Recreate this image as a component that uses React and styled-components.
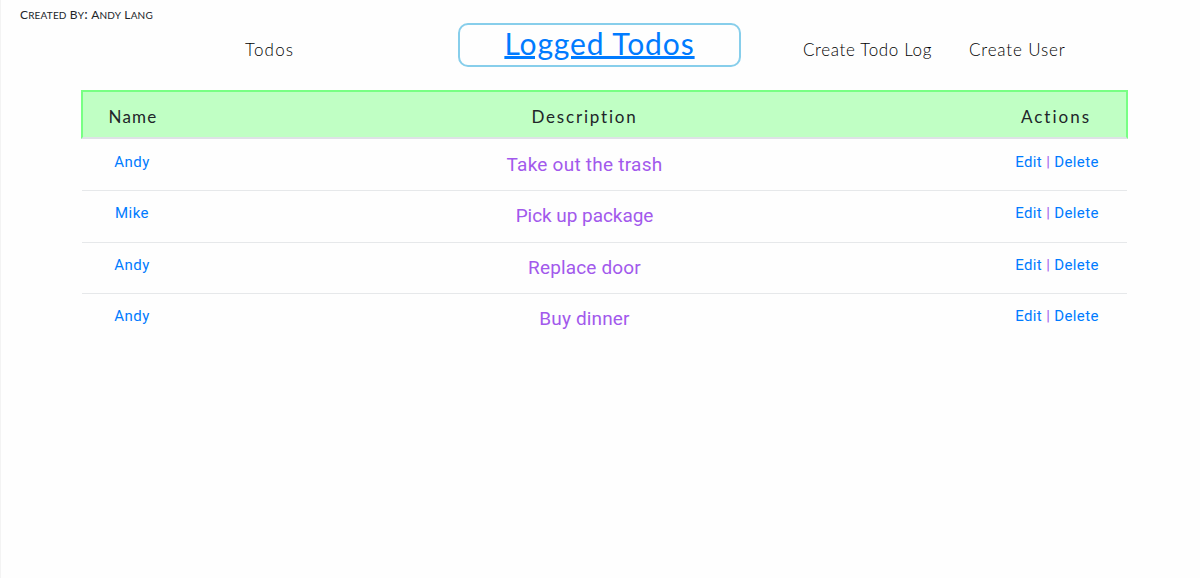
import React from "react";
import styled, { createGlobalStyle } from "styled-components";

const GlobalStyle = createGlobalStyle`
  * { box-sizing: border-box; }
  body { margin: 0; background: #fefefe; color: #212529; }
`;

const Page = styled.div`
  height: 578px;
  overflow: hidden;
  border-left: 1px solid #f3f3f3;
  font-family: Roboto, "Liberation Sans", sans-serif;
`;

const Credit = styled.div`
  height: 23px;
  padding: 6px 0 0 19px;
  font: 12px/16px Lato, sans-serif;
  letter-spacing: 0.17px;
  white-space: nowrap;
`;

const CreditWord = styled.span`
  display: inline-block;
  font-size: 14px;
  font-variant: small-caps;

  &::first-letter {
    font-size: 12px;
  }
`;

const Nav = styled.nav`
  display: grid;
  grid-template-columns: 457px 283px 1fr;
  height: 67px;
  align-items: start;
`;

const NavSide = styled.div`
  display: flex;
  gap: 37px;
  padding-top: 15px;
  padding-left: ${(p) => p.$indent}px;
`;

const NavLink = styled.a`
  width: ${(p) => p.$w}px;
  font: 300 17px/24px Lato, sans-serif;
  letter-spacing: ${(p) => p.$ls}px;
  white-space: nowrap;
  color: #000;
`;

const TitleBox = styled.div`
  height: 44px;
  border: 2px solid #87ceeb;
  border-radius: 10px;
  text-align: center;
`;

const Title = styled.a`
  font: 400 30px/36px Lato, sans-serif;
  letter-spacing: 0.9px;
  color: #007bff;
  text-decoration: underline;
  text-decoration-thickness: 3px;
  text-underline-offset: 1px;
`;

const Table = styled.div`
  width: 1047px;
  margin-left: 80px;
`;

const Row = styled.div`
  display: grid;
  grid-template-columns: 100px 1fr 140px;
  text-align: center;
  white-space: nowrap;
`;

const Header = styled(Row)`
  height: 49px;
  background: #c0ffc4;
  border: 2px solid #78ff84;
  border-bottom-color: #dee2e6;
`;

const HeadCell = styled.div`
  padding-top: 13px;
  font: 400 17px/24px Lato, sans-serif;
  letter-spacing: ${(p) => p.$ls}px;
`;

const BodyRow = styled(Row)`
  height: ${(p) => p.$h}px;
  margin: 0 1px;
  border-bottom: ${(p) => (p.$last ? "0" : "1px solid #e6e8ea")};

  &:nth-child(2) {
    padding-top: 1px;
  }
`;

const Cell = styled.div`
  padding-top: 10px;
  font-size: 15px;
  line-height: 24px;
  color: #a259ec;
  letter-spacing: ${(p) => p.$ls || 0}px;
`;

const Description = styled(Cell)`
  padding-top: 11px;
  font-size: 19px;
  line-height: 28px;
`;

const Link = styled.a`
  color: #007bff;
`;

const todos = [
  { name: "Andy", text: "Take out the trash", h: 52, ls: 0.25 },
  { name: "Mike", text: "Pick up package", h: 52, ls: -0.05 },
  { name: "Andy", text: "Replace door", h: 51, ls: 0.15 },
  { name: "Andy", text: "Buy dinner", h: 52, ls: 0.15 },
];

export default function App() {
  return (
    <Page>
      <GlobalStyle />
      <Credit>
        <CreditWord>Created</CreditWord> <CreditWord>By:</CreditWord>{" "}
        <CreditWord>Andy</CreditWord> <CreditWord>Lang</CreditWord>
      </Credit>
      <Nav>
        <NavSide $indent={244}>
          <NavLink $w={50} $ls={1.2}>Todos</NavLink>
        </NavSide>
        <TitleBox>
          <Title>Logged Todos</Title>
        </TitleBox>
        <NavSide $indent={62}>
          <NavLink $w={129} $ls={0.65}>Create Todo Log</NavLink>
          <NavLink $w={97} $ls={0.85}>Create User</NavLink>
        </NavSide>
      </Nav>
      <Table>
        <Header>
          <HeadCell $ls={1.2}>Name</HeadCell>
          <HeadCell $ls={1.8}>Description</HeadCell>
          <HeadCell $ls={2}>Actions</HeadCell>
        </Header>
        {todos.map((t, i) => (
          <BodyRow key={i} $h={t.h} $last={i === todos.length - 1}>
            <Cell $ls={0.45}><Link>{t.name}</Link></Cell>
            <Description $ls={t.ls}>{t.text}</Description>
            <Cell $ls={0.36}><Link>Edit</Link> | <Link>Delete</Link></Cell>
          </BodyRow>
        ))}
      </Table>
    </Page>
  );
}
